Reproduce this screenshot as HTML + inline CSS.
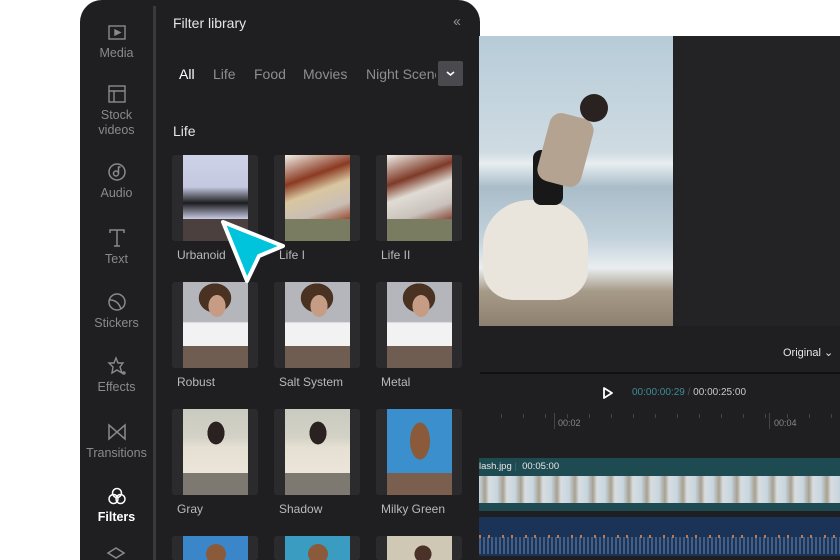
<!DOCTYPE html>
<html style="width:840px;height:560px;overflow:hidden"><head><meta charset="utf-8"><style>
*{margin:0;padding:0;box-sizing:border-box}
body{width:840px;height:560px;background:#fff;position:relative;overflow:hidden;font-family:"Liberation Sans",sans-serif}
.a{position:absolute}
.side{left:80px;top:0;width:400px;height:560px;background:#1f1f21;border-top-left-radius:22px;border-top-right-radius:22px}
.nav{width:73px;text-align:center;color:#8a8a8e;font-size:12.5px;line-height:15px}
.nav svg{display:block;margin:0 auto 4px}
.card{width:86px;height:86px;background:#2b2b2e;border-radius:3px}
.card .ph{position:absolute;left:11px;top:0;width:65px;height:64px}
.card .sw{position:absolute;left:11px;top:64px;width:65px;height:22px}
.lbl{color:#b9b9bc;font-size:12px}
.tab{color:#8e8e92;font-size:14px;top:66px}
</style></head><body>
<div class="a side"></div>
<div class="a" style="left:153px;top:6px;width:3px;height:554px;background:#3a3a3d"></div>

<div class="a nav" style="left:80px;top:24px"><svg width="20" height="18" viewBox="0 0 20 18" fill="none" stroke="#8a8a8e" stroke-width="1.4"><rect x="2" y="2" width="16" height="13"/><path d="M8 6l5 2.5-5 2.5z" fill="#8a8a8e"/></svg>Media</div>
<div class="a nav" style="left:80px;top:84px"><svg width="20" height="20" viewBox="0 0 20 20" fill="none" stroke="#8a8a8e" stroke-width="1.4"><rect x="2" y="2" width="16" height="16"/><path d="M2 7h16M7 7v11"/></svg>Stock<br>videos</div>
<div class="a nav" style="left:80px;top:162px"><svg width="20" height="20" viewBox="0 0 20 20" fill="none" stroke="#8a8a8e" stroke-width="1.5"><circle cx="10" cy="10" r="8"/><circle cx="9" cy="11.5" r="2.5"/><path d="M11.5 11.5V5h2"/></svg>Audio</div>
<div class="a nav" style="left:80px;top:228px"><svg width="20" height="20" viewBox="0 0 20 20" fill="none" stroke="#8a8a8e" stroke-width="1.5"><path d="M3 5V2h14v3M10 2v16M7 18h6"/></svg>Text</div>
<div class="a nav" style="left:80px;top:292px"><svg width="20" height="20" viewBox="0 0 20 20" fill="none" stroke="#8a8a8e" stroke-width="1.5"><circle cx="10" cy="10" r="8"/><path d="M3 8c5 0 9 3 11 9"/></svg>Stickers</div>
<div class="a nav" style="left:80px;top:356px"><svg width="20" height="20" viewBox="0 0 20 20" fill="none" stroke="#8a8a8e" stroke-width="1.4"><path d="M9 2l2 5 5 0-3 4 2 6-5-3-5 3 1-6-4-4 5 0z"/><circle cx="17" cy="17" r="1"/></svg>Effects</div>
<div class="a nav" style="left:80px;top:422px"><svg width="20" height="20" viewBox="0 0 20 20" fill="none" stroke="#8a8a8e" stroke-width="1.5"><path d="M2 3v14l16-14v14z"/></svg>Transitions</div>
<div class="a nav" style="left:80px;top:486px;color:#fff;font-weight:bold"><svg width="20" height="20" viewBox="0 0 20 20" fill="none" stroke="#fff" stroke-width="1.5"><circle cx="10" cy="7" r="4.5"/><circle cx="6.5" cy="13" r="4.5"/><circle cx="13.5" cy="13" r="4.5"/></svg>Filters</div>
<div class="a" style="left:106px;top:546px;width:20px;height:14px;overflow:hidden"><svg width="20" height="14" viewBox="0 0 20 14" fill="none" stroke="#8a8a8e" stroke-width="1.5"><path d="M2 7l8-5 8 5-8 5z"/></svg></div>

<div class="a" style="left:173px;top:15px;color:#e6e6e8;font-size:14px">Filter library</div>
<div class="a" style="left:453px;top:13px;color:#8e8e92;font-size:15px;letter-spacing:-2px">‹‹</div>
<div class="a tab" style="left:179px;color:#fff">All</div>
<div class="a tab" style="left:213px">Life</div>
<div class="a tab" style="left:254px">Food</div>
<div class="a tab" style="left:303px">Movies</div>
<div class="a tab" style="left:366px;width:70px;overflow:hidden;white-space:nowrap">Night Scenes</div>
<div class="a" style="left:438px;top:61px;width:25px;height:25px;background:#4a4a4e;border-radius:2px"><svg width="25" height="25" viewBox="0 0 25 25"><path d="M9 11l3.5 3 3.5-3" fill="none" stroke="#fff" stroke-width="1.6"/></svg></div>
<div class="a" style="left:173px;top:123px;color:#e6e6e8;font-size:14px">Life</div>

<div class="a card" style="left:172px;top:155px"><div class="ph" style="background:linear-gradient(180deg,#cfd3e8 0,#c4c8e0 50%,#1c1c1e 75%,#c8cce4 100%)"></div><div class="sw" style="background:#4b403d"></div></div>
<div class="a card" style="left:274px;top:155px"><div class="ph" style="background:linear-gradient(160deg,#f0eee8 0,#8b3a22 35%,#d9c7a0 55%,#c9beb5 80%,#9a4c30 100%)"></div><div class="sw" style="background:#7a7c62"></div></div>
<div class="a card" style="left:376px;top:155px"><div class="ph" style="background:linear-gradient(160deg,#f0eee8 0,#7e3a28 35%,#e0dcd4 55%,#c9c2bc 80%,#8a4c3a 100%)"></div><div class="sw" style="background:#7a7c62"></div></div>
<div class="a lbl" style="left:177px;top:248px">Urbanoid</div>
<div class="a lbl" style="left:279px;top:248px">Life I</div>
<div class="a lbl" style="left:381px;top:248px">Life II</div>
<div class="a card" style="left:172px;top:282px"><div class="ph" style="background:radial-gradient(ellipse 14px 18px at 34px 24px,#c69c84 60%,transparent 62%),radial-gradient(ellipse 20px 18px at 32px 16px,#4a3222 80%,transparent 82%),linear-gradient(180deg,#b4b6bb 0,#b4b6bb 62%,#f2f2f2 64%,#f2f2f2 100%)"></div><div class="sw" style="background:#6f5d52"></div></div>
<div class="a card" style="left:274px;top:282px"><div class="ph" style="background:radial-gradient(ellipse 14px 18px at 34px 24px,#c69c84 60%,transparent 62%),radial-gradient(ellipse 20px 18px at 32px 16px,#4a3222 80%,transparent 82%),linear-gradient(180deg,#b4b6bb 0,#b4b6bb 62%,#f2f2f2 64%,#f2f2f2 100%)"></div><div class="sw" style="background:#6f5d52"></div></div>
<div class="a card" style="left:376px;top:282px"><div class="ph" style="background:radial-gradient(ellipse 14px 18px at 34px 24px,#c69c84 60%,transparent 62%),radial-gradient(ellipse 20px 18px at 32px 16px,#4a3222 80%,transparent 82%),linear-gradient(180deg,#b4b6bb 0,#b4b6bb 62%,#f2f2f2 64%,#f2f2f2 100%)"></div><div class="sw" style="background:#6f5d52"></div></div>
<div class="a lbl" style="left:177px;top:375px">Robust</div>
<div class="a lbl" style="left:279px;top:375px">Salt System</div>
<div class="a lbl" style="left:381px;top:375px">Metal</div>
<div class="a card" style="left:172px;top:409px"><div class="ph" style="background:radial-gradient(ellipse 12px 16px at 33px 24px,#2a2220 70%,transparent 72%),linear-gradient(180deg,#c9cac0 0,#d4d2c6 45%,#e6e0d4 60%,#ebe5da 100%)"></div><div class="sw" style="background:#7d7870"></div></div>
<div class="a card" style="left:274px;top:409px"><div class="ph" style="background:radial-gradient(ellipse 12px 16px at 33px 24px,#2a2220 70%,transparent 72%),linear-gradient(180deg,#c9cac0 0,#d4d2c6 45%,#e6e0d4 60%,#ebe5da 100%)"></div><div class="sw" style="background:#7d7870"></div></div>
<div class="a card" style="left:376px;top:409px"><div class="ph" style="background:radial-gradient(ellipse 14px 26px at 33px 32px,#8a5a3a 70%,transparent 72%),#3a8fcc"></div><div class="sw" style="background:#7a5e4e"></div></div>
<div class="a lbl" style="left:177px;top:502px">Gray</div>
<div class="a lbl" style="left:279px;top:502px">Shadow</div>
<div class="a lbl" style="left:381px;top:502px">Milky Green</div>
<div class="a card" style="left:172px;top:536px;height:24px;overflow:hidden"><div class="ph" style="height:24px;background:radial-gradient(ellipse 14px 14px at 33px 18px,#8a5a3a 70%,transparent 72%),#3a86c8"></div></div>
<div class="a card" style="left:274px;top:536px;height:24px;overflow:hidden"><div class="ph" style="height:24px;background:radial-gradient(ellipse 14px 14px at 33px 18px,#8a5a3a 70%,transparent 72%),#3a9cc0"></div></div>
<div class="a card" style="left:376px;top:536px;height:24px;overflow:hidden"><div class="ph" style="height:24px;background:radial-gradient(ellipse 12px 12px at 36px 18px,#4a3228 70%,transparent 72%),#cfc8b4"></div></div>

<svg class="a" style="left:215px;top:215px" width="80" height="75" viewBox="215 215 80 75"><path d="M223 222L283 246 259 256 247 281z" fill="#00c4dc" stroke="#fff" stroke-width="4" stroke-linejoin="round"/></svg>

<div class="a" style="left:480px;top:36px;width:360px;height:524px;background:#1f1f21"></div>
<div class="a" style="left:673px;top:36px;width:167px;height:290px;background:#232326"></div>
<div class="a" style="left:479px;top:36px;width:194px;height:290px;background:linear-gradient(180deg,#b7ccd8 0,#cfdbe2 40%,#e8eef0 44%,#a9bdc9 52%,#c3d2dc 70%,#e9eef0 80%,#a69a88 88%,#8e8070 100%)"></div>
<div class="a" style="left:483px;top:200px;width:105px;height:100px;background:#e9e5dc;border-radius:45% 45% 30% 30%"></div>
<div class="a" style="left:533px;top:150px;width:30px;height:55px;background:#181818;border-radius:8px"></div>
<div class="a" style="left:543px;top:115px;width:45px;height:70px;background:#b5a392;border-radius:12px;transform:rotate(15deg)"></div>
<div class="a" style="left:580px;top:94px;width:28px;height:28px;background:#2a2220;border-radius:50%"></div>

<div class="a" style="left:783px;top:346px;color:#e6e6e8;font-size:11px">Original ⌄</div>
<div class="a" style="left:480px;top:372px;width:360px;height:2px;background:#111"></div>
<svg class="a" style="left:601px;top:386px" width="14" height="14" viewBox="0 0 14 14"><path d="M3 2l8 5-8 5z" fill="none" stroke="#fff" stroke-width="1.8" stroke-linejoin="round"/></svg>
<div class="a" style="left:632px;top:387px;font-size:10px;color:#3f8c95">00:00:00:29 <span style="color:#555">/</span> <span style="color:#c8c8cc">00:00:25:00</span></div>
<div class="a" style="left:480px;top:414px;width:360px;height:4px;background:repeating-linear-gradient(90deg,transparent 0,transparent 21px,#444 21px,#444 22px)"></div>
<div class="a" style="left:554px;top:413px;width:1px;height:16px;background:#444"></div>
<div class="a" style="left:769px;top:413px;width:1px;height:16px;background:#444"></div>
<div class="a" style="left:558px;top:418px;font-size:9px;color:#888">00:02</div>
<div class="a" style="left:774px;top:418px;font-size:9px;color:#888">00:04</div>
<div class="a" style="left:479px;top:458px;width:361px;height:53px;background:#1e4b52"></div>
<div class="a" style="left:479px;top:461px;font-size:9.5px;color:#e6e6e8">lash.jpg <span style="color:#3d6a70">|</span> &nbsp;00:05:00</div>
<div class="a" style="left:479px;top:476px;width:361px;height:27px;background:repeating-linear-gradient(90deg,#c7d6e0 0,#a8a090 6px,#d8dde0 10px,#c7d6e0 18px)"></div>
<div class="a" style="left:479px;top:517px;width:361px;height:39px;background:#1b3357"></div>
<div class="a" style="left:479px;top:537px;width:361px;height:17px;background:repeating-linear-gradient(90deg,#4e6a90 0,#4e6a90 2px,transparent 2px,transparent 4px);opacity:.8"></div>
<div class="a" style="left:479px;top:535px;width:361px;height:3px;background:repeating-linear-gradient(90deg,#c07850 0,#c07850 2px,transparent 2px,transparent 9px,#c07850 9px,#c07850 11px,transparent 11px,transparent 23px)"></div>
</body></html>
